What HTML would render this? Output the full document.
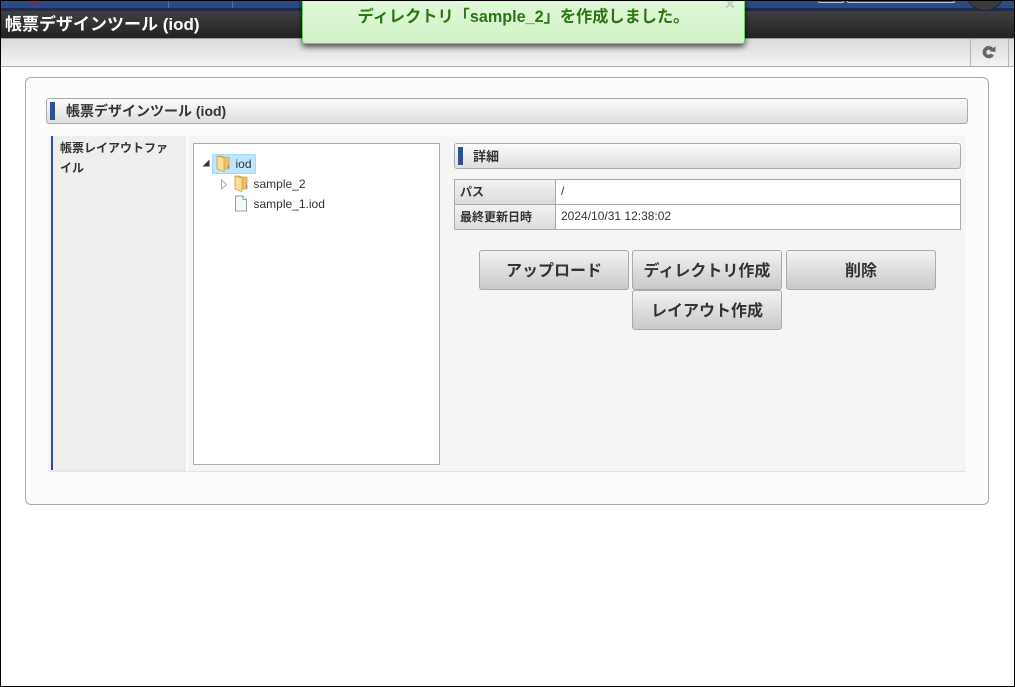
<!DOCTYPE html>
<html lang="ja">
<head>
<meta charset="utf-8">
<title>帳票デザインツール (iod)</title>
<style>
html,body{margin:0;padding:0;background:#fff}
body{width:1015px;height:687px;position:relative;overflow:hidden;font-family:"Liberation Sans","Noto Sans CJK JP",sans-serif;color:#333}
div,span{position:absolute;box-sizing:border-box;white-space:nowrap}
.frame{left:0;top:0;width:1015px;height:687px;border:1px solid #000;z-index:50;pointer-events:none}
.hdr{background:linear-gradient(#fbfbfb,#dedede);border:1px solid #aaa;border-radius:3px}
.bar{background:#2f4f92;width:5px;height:18px}
.cell{border:1px solid #aaa;font-size:12px;line-height:23px;height:26px}
.th{background:linear-gradient(#f2f2f2,#dcdcdc);font-weight:bold;padding-left:5px;color:#333;line-height:25px}
.td{background:#fff;padding-left:5px;color:#333}
.btn{width:150px;background:linear-gradient(#f3f3f3,#c9c9c9);border:1px solid #aaa;border-radius:3px;font-weight:bold;font-size:16px;color:#333;text-align:center}
.t{font-size:12px;line-height:16px;color:#333}
</style>
</head>
<body>
<div style="left:0;top:0;width:1015px;height:8px;background:#2c4a85"></div>
<div style="left:0;top:8px;width:1015px;height:3px;background:#1f2c4c"></div>
<div style="left:168px;top:1px;width:1px;height:7px;background:#4d6cab"></div>
<div style="left:232px;top:1px;width:1px;height:7px;background:#4d6cab"></div>
<div style="left:28px;top:0;width:12px;height:3px;border-radius:0 0 6px 6px;background:#9c2436"></div>
<div style="left:818px;top:0;width:26px;height:3px;border:1px solid #b9c6e0;border-top:0;border-radius:0 0 2px 2px"></div>
<div style="left:847px;top:0;width:108px;height:3px;border:1px solid #b9c6e0;border-top:0;border-radius:0 0 2px 2px"></div>
<div style="left:966px;top:-24px;width:38px;height:35px;border-radius:50%;background:#3b3b3b;border:1px solid #1d2438"></div>

<div style="left:0;top:11px;width:1015px;height:27px;background:linear-gradient(#404040,#222)"></div>
<div style="left:5px;top:13px;font-size:17px;line-height:23px;font-weight:bold;color:#fff">帳票デザインツール (iod)</div>

<div style="left:0;top:38px;width:1015px;height:29px;background:linear-gradient(#dadada,#f3f3f3);border-bottom:1px solid #aaa;border-top:1px solid #999"></div>
<div style="left:970px;top:39px;width:39px;height:27px;border-left:1px solid #b5b5b5;border-right:1px solid #b5b5b5"></div>
<svg style="position:absolute;left:982px;top:45px" width="14" height="14" viewBox="0 0 14 14"><path d="M10.4 9.4A4.3 4.3 0 1 1 10.2 4.6" fill="none" stroke="#666" stroke-width="3.6"/><path d="M7.5 6.2L13.5 7L13.5 1.2Z" fill="#666"/></svg>

<div style="left:25px;top:77px;width:964px;height:428px;background:#fcfcfe;border:1px solid #aaa;border-radius:6px"></div>

<div class="hdr" style="left:46px;top:98px;width:922px;height:26px"></div>
<div class="bar" style="left:50px;top:102px"></div>
<div style="left:66px;top:102px;font-size:14px;line-height:19px;font-weight:bold;color:#333">帳票デザインツール (iod)</div>

<div style="left:48px;top:136px;width:918px;height:336px;background:#f5f5f5;border-bottom:1px solid #e2e2e2"></div>
<div style="left:50px;top:136px;width:136px;height:335px;background:#eee;border-left:0"></div>
<div style="left:51px;top:136px;width:2px;height:334px;background:#2f4f92"></div>
<div style="left:48px;top:470px;width:138px;height:2px;background:#e6e6e6"></div>
<div style="left:186px;top:136px;width:2px;height:336px;background:#fcfcfe"></div>
<div style="left:60px;top:138px;width:115px;font-size:12px;line-height:20px;font-weight:bold;color:#333;white-space:normal">帳票レイアウトファイル</div>

<div style="left:193px;top:143px;width:247px;height:322px;background:#fff;border:1px solid #aaa"></div>
<svg style="position:absolute;left:202px;top:159px" width="8" height="8" viewBox="0 0 8 8"><path d="M7.5 .5V7.5H.5Z" fill="#333"/></svg>
<div style="left:212px;top:154px;width:44px;height:20px;background:#bfe6fd;border:1px solid #99defd"></div>
<svg style="position:absolute;left:216px;top:155px" width="14" height="17" viewBox="0 0 14 17"><path d="M1 1H6L7 2H13V14H1Z" fill="#eebf63" stroke="#c9a253" stroke-width=".8"/><path d="M1 1L8 3V16.5L1 14Z" fill="#fbdf98" stroke="#c9a253" stroke-width=".8"/><path d="M12.5 10v3" stroke="#4aa6d8" stroke-width="1.2"/></svg>
<div class="t" style="left:235.5px;top:156px">iod</div>
<svg style="position:absolute;left:220px;top:179px" width="8" height="11" viewBox="0 0 8 11"><path d="M1.5 1L6.5 5.5L1.5 10Z" fill="#fff" stroke="#aaa"/></svg>
<svg style="position:absolute;left:234px;top:175px" width="14" height="17" viewBox="0 0 14 17"><path d="M1 1H6L7 2H13V14H1Z" fill="#eebf63" stroke="#c9a253" stroke-width=".8"/><path d="M1 1L8 3V16.5L1 14Z" fill="#fbdf98" stroke="#c9a253" stroke-width=".8"/><path d="M12.5 10v3" stroke="#4aa6d8" stroke-width="1.2"/></svg>
<div class="t" style="left:253.5px;top:176px">sample_2</div>
<svg style="position:absolute;left:234px;top:195px" width="14" height="17" viewBox="0 0 14 17"><path d="M1.5 1H9L12.5 4.5V16H1.5Z" fill="#f3f8f8" stroke="#8fa3a8"/><path d="M9 1V4.5H12.5" fill="#fff" stroke="#8fa3a8"/></svg>
<div class="t" style="left:253.5px;top:196px">sample_1.iod</div>

<div class="hdr" style="left:454px;top:143px;width:507px;height:26px"></div>
<div class="bar" style="left:458px;top:147px"></div>
<div style="left:473px;top:148px;font-size:13px;line-height:18px;font-weight:bold;color:#333">詳細</div>

<div class="cell th" style="left:454px;top:179px;width:102px">パス</div>
<div class="cell td" style="left:555px;top:179px;width:406px">/</div>
<div class="cell th" style="left:454px;top:204px;width:102px">最終更新日時</div>
<div class="cell td" style="left:555px;top:204px;width:406px">2024/10/31 12:38:02</div>

<div class="btn" style="left:479px;top:250px;height:40px;line-height:42px">アップロード</div>
<div class="btn" style="left:632px;top:250px;height:40px;line-height:42px">ディレクトリ作成</div>
<div class="btn" style="left:786px;top:250px;height:40px;line-height:42px">削除</div>
<div class="btn" style="left:632px;top:290px;height:40px;line-height:42px">レイアウト作成</div>

<div style="left:302px;top:-4px;width:443px;height:48px;background:linear-gradient(#e2f9dc,#cff2c4);border:1px solid #69d060;border-radius:3px;box-shadow:0 3px 6px rgba(0,0,0,.65);z-index:10"></div>
<div style="left:302px;top:6px;width:443px;text-align:center;font-size:16.2px;line-height:22px;font-weight:bold;color:#2f7414;z-index:11">ディレクトリ「sample_2」を作成しました。</div>
<svg style="position:absolute;left:725px;top:0;z-index:11" width="10" height="9" viewBox="0 0 10 9"><path d="M1.5 0L8.5 7.5M8.5 0L1.5 7.5" stroke="#c5c9c3" stroke-width="2.2"/></svg>

<div class="frame"></div>
</body>
</html>
